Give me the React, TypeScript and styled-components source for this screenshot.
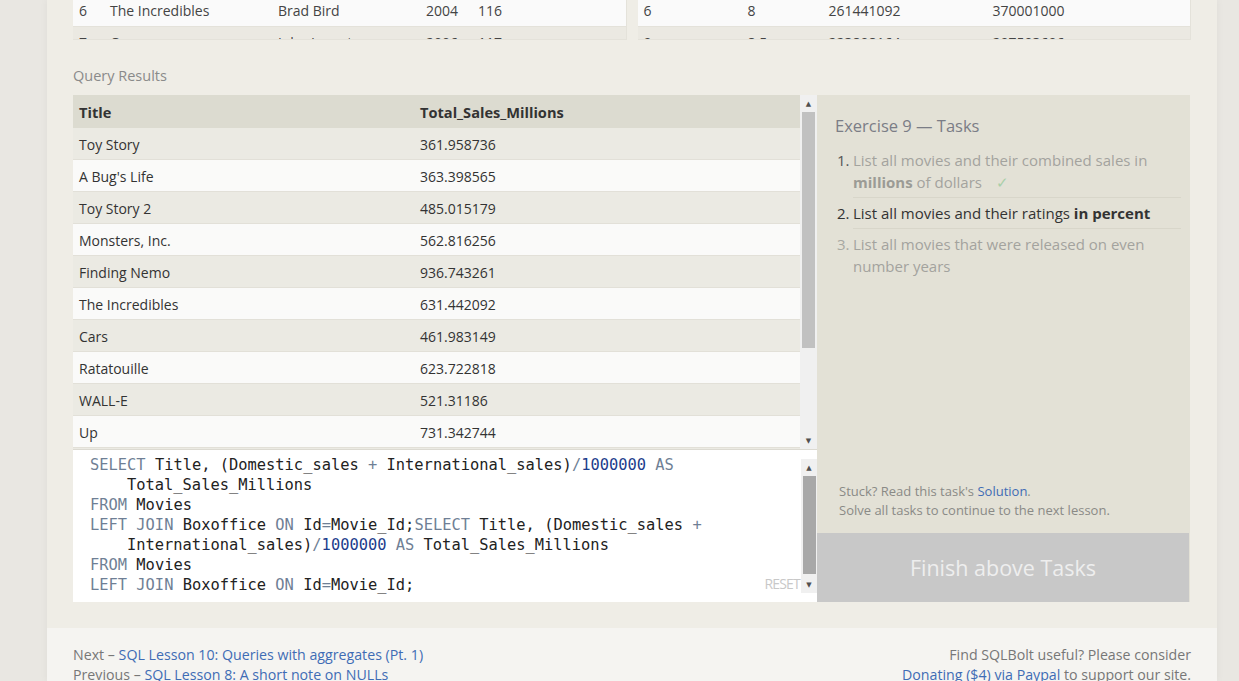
import React from "react";
import styled, { createGlobalStyle } from "styled-components";

const GlobalStyle = createGlobalStyle`
  html, body {
    margin: 0;
    padding: 0;
    background: #e9e7e2;
  }
  body {
    font-family: "Open Sans", "Noto Sans", sans-serif;
    overflow: hidden;
  }
  * { box-sizing: border-box; }
`;

const movies = [
  ["6", "The Incredibles", "Brad Bird", "2004", "116"],
  ["7", "Cars", "John Lasseter", "2006", "117"],
];

const boxoffice = [
  ["6", "8", "261441092", "370001000"],
  ["9", "8.5", "223808164", "297503696"],
];

const results = [
  ["Toy Story", "361.958736"],
  ["A Bug's Life", "363.398565"],
  ["Toy Story 2", "485.015179"],
  ["Monsters, Inc.", "562.816256"],
  ["Finding Nemo", "936.743261"],
  ["The Incredibles", "631.442092"],
  ["Cars", "461.983149"],
  ["Ratatouille", "623.722818"],
  ["WALL-E", "521.31186"],
  ["Up", "731.342744"],
  ["Brave", "538.983207"],
];

export default function App() {
  return (
    <>
      <GlobalStyle />
      <Page>
        <Column>
          <Lesson>
            <TopTables>
              <DataBox>
                <DataInner>
                  {movies.map((r, i) => (
                    <DataRow key={i} alt={i % 2 === 1} cols="31px 168px 148px 52px 1fr">
                      {r.map((c, j) => (
                        <span key={j}>{c}</span>
                      ))}
                    </DataRow>
                  ))}
                </DataInner>
              </DataBox>
              <DataBox>
                <DataInner>
                  {boxoffice.map((r, i) => (
                    <DataRow key={i} alt={i % 2 === 1} cols="104px 81px 164px 1fr">
                      {r.map((c, j) => (
                        <span key={j}>{c}</span>
                      ))}
                    </DataRow>
                  ))}
                </DataInner>
              </DataBox>
            </TopTables>

            <SectionLabel>Query Results</SectionLabel>

            <Workspace>
              <LeftCol>
                <Results>
                  <ResultTable>
                    <ResultHead>
                      <span>Title</span>
                      <span>Total_Sales_Millions</span>
                    </ResultHead>
                    {results.map((r, i) => (
                      <ResultRow key={i} alt={i % 2 === 1}>
                        <span>{r[0]}</span>
                        <span>{r[1]}</span>
                      </ResultRow>
                    ))}
                  </ResultTable>
                  <Scrollbar>
                    <Arrow>▲</Arrow>
                    <Track>
                      <Thumb size={236} />
                    </Track>
                    <Arrow>▼</Arrow>
                  </Scrollbar>
                </Results>

                <Editor>
                  <Code>
                    <CodeLine>
                      <Kw>SELECT</Kw> Title, (Domestic_sales <Kw>+</Kw> International_sales)
                      <Kw>/</Kw>
                      <Num>1000000</Num> <Kw>AS</Kw>
                    </CodeLine>
                    <CodeLine indent>Total_Sales_Millions</CodeLine>
                    <CodeLine>
                      <Kw>FROM</Kw> Movies
                    </CodeLine>
                    <CodeLine>
                      <Kw>LEFT JOIN</Kw> Boxoffice <Kw>ON</Kw> Id<Kw>=</Kw>Movie_Id;
                      <Kw>SELECT</Kw> Title, (Domestic_sales <Kw>+</Kw>
                    </CodeLine>
                    <CodeLine indent>
                      International_sales)<Kw>/</Kw>
                      <Num>1000000</Num> <Kw>AS</Kw> Total_Sales_Millions
                    </CodeLine>
                    <CodeLine>
                      <Kw>FROM</Kw> Movies
                    </CodeLine>
                    <CodeLine>
                      <Kw>LEFT JOIN</Kw> Boxoffice <Kw>ON</Kw> Id<Kw>=</Kw>Movie_Id;
                    </CodeLine>
                    <Reset>RESET</Reset>
                  </Code>
                  <EditorScroll>
                    <Arrow>▲</Arrow>
                    <Track>
                      <Thumb size={98} dark />
                    </Track>
                    <Arrow>▼</Arrow>
                  </EditorScroll>
                </Editor>
              </LeftCol>

              <TaskPanel>
                <TaskBody>
                  <TaskTitle>Exercise 9 — Tasks</TaskTitle>
                  <TaskList>
                    <Task state="done">
                      <TaskNum state="done">1.</TaskNum>
                      <TaskText>
                        List all movies and their combined sales in <b>millions</b> of dollars
                        <Check>✓</Check>
                      </TaskText>
                    </Task>
                    <Task state="active">
                      <TaskNum state="active">2.</TaskNum>
                      <TaskText>
                        List all movies and their ratings <b>in percent</b>
                      </TaskText>
                    </Task>
                    <Task state="todo" last>
                      <TaskNum state="todo">3.</TaskNum>
                      <TaskText>List all movies that were released on even number years</TaskText>
                    </Task>
                  </TaskList>
                </TaskBody>
                <Stuck>
                  Stuck? Read this task's <Link>Solution</Link>.
                  <br />
                  Solve all tasks to continue to the next lesson.
                </Stuck>
                <FinishButton>Finish above Tasks</FinishButton>
              </TaskPanel>
            </Workspace>
          </Lesson>

          <Footer>
            <FooterLeft>
              Next – <Link>SQL Lesson 10: Queries with aggregates (Pt. 1)</Link>
              <br />
              Previous – <Link>SQL Lesson 8: A short note on NULLs</Link>
            </FooterLeft>
            <FooterRight>
              Find SQLBolt useful? Please consider
              <br />
              <Link>Donating ($4) via Paypal</Link> to support our site.
            </FooterRight>
          </Footer>
        </Column>
      </Page>
    </>
  );
}

const Page = styled.div`
  height: 681px;
  overflow: hidden;
  display: flex;
  background: #e9e7e2;
`;

const Column = styled.div`
  margin-left: 47px;
  width: 1170px;
  display: flex;
  flex-direction: column;
  box-shadow: 0 0 8px rgba(0, 0, 0, 0.05);
`;

const Lesson = styled.div`
  background: #efede6;
  padding: 0 26px 26px;
  display: flex;
  flex-direction: column;
`;

const TopTables = styled.div`
  display: flex;
  gap: 11px;
  height: 40px;
`;

const DataBox = styled.div`
  flex: 1;
  overflow: hidden;
  background: #fafafa;
  border-right: 1px solid #e4e2da;
  border-bottom: 1px solid #e4e2da;
`;

const DataInner = styled.div`
  margin-top: -6px;
`;

const DataRow = styled.div<{ alt?: boolean; cols: string }>`
  display: grid;
  grid-template-columns: ${({ cols }) => cols};
  height: 33px;
  align-items: center;
  padding-left: 6px;
  font-size: 14px;
  color: #444;
  background: ${({ alt }) => (alt ? "#ebe9e2" : "#fafafa")};
  border-bottom: 1px solid #e4e2da;
  &:last-child {
    align-items: start;
    padding-top: 6px;
  }
`;

const SectionLabel = styled.div`
  margin: 26px 0 9px;
  font-size: 14.5px;
  line-height: 20px;
  color: #8a8a8a;
`;

const Workspace = styled.div`
  display: flex;
  height: 507px;
`;

const LeftCol = styled.div`
  width: 744px;
  display: flex;
  flex-direction: column;
`;

const Results = styled.div`
  height: 354px;
  display: flex;
  overflow: hidden;
`;

const ResultTable = styled.div`
  flex: 1;
  overflow: hidden;
`;

const ResultHead = styled.div`
  display: grid;
  grid-template-columns: 341px 1fr;
  height: 33px;
  padding-top: 1px;
  align-items: center;
  padding-left: 6px;
  background: #dcdbd0;
  font-weight: 700;
  font-size: 14.6px;
  color: #333;
`;

const ResultRow = styled.div<{ alt?: boolean }>`
  display: grid;
  grid-template-columns: 341px 1fr;
  height: 32px;
  padding-top: 1px;
  align-items: center;
  padding-left: 6px;
  font-size: 14px;
  color: #333;
  background: ${({ alt }) => (alt ? "#fafaf9" : "#ebeae3")};
  border-bottom: 1px solid #e2e0d8;
`;

const Scrollbar = styled.div`
  width: 17px;
  display: flex;
  flex-direction: column;
  background: #f0f0f0;
`;

const EditorScroll = styled(Scrollbar)`
  width: 16px;
  margin: 9px 0 9px 1px;
`;

const Arrow = styled.div`
  height: 17px;
  display: flex;
  align-items: center;
  justify-content: center;
  font-size: 7px;
  color: #505050;
  font-family: "DejaVu Sans", sans-serif;
`;

const Track = styled.div`
  flex: 1;
  display: flex;
  flex-direction: column;
  align-items: center;
`;

const Thumb = styled.div<{ size: number; dark?: boolean }>`
  width: 13px;
  height: ${({ size }) => size}px;
  background: ${({ dark }) => (dark ? "#a8a8a8" : "#c1c1c1")};
`;

const Editor = styled.div`
  flex: 1;
  display: flex;
  background: #fff;
  border-top: 1px solid #dcdad2;
`;

const Code = styled.div`
  position: relative;
  flex: 1;
  padding: 5px 0 0 17px;
  font-family: "DejaVu Sans Mono", "Liberation Mono", monospace;
  font-size: 15.4px;
  line-height: 20px;
  color: #222;
`;

const CodeLine = styled.div<{ indent?: boolean }>`
  white-space: pre;
  padding-left: ${({ indent }) => (indent ? "37px" : "0")};
`;

const Kw = styled.span`
  color: #6f7f95;
`;

const Num = styled.span`
  color: #1c3d8c;
`;

const Reset = styled.span`
  position: absolute;
  right: 0;
  bottom: 8px;
  font-family: "Open Sans", sans-serif;
  font-size: 14px;
  color: #c8c8c8;
  letter-spacing: -0.8px;
`;

const TaskPanel = styled.div`
  width: 373px;
  display: flex;
  flex-direction: column;
  background: #e3e1d6;
`;

const TaskBody = styled.div`
  flex: 1;
  padding: 18px 9px 0 18px;
`;

const TaskTitle = styled.div`
  font-size: 16.5px;
  line-height: 26px;
  color: #7b7d86;
  margin-bottom: 6px;
`;

const TaskList = styled.div`
  display: flex;
  flex-direction: column;
`;

type TaskState = "done" | "active" | "todo";

const Task = styled.div<{ state: TaskState; last?: boolean }>`
  display: grid;
  grid-template-columns: 18px 1fr;
  font-size: 15px;
  line-height: 22px;
  color: ${({ state }) => (state === "active" ? "#333" : "#a3a39e")};
  & > div {
    padding: 4px 0;
    border-bottom: ${({ last }) => (last ? "none" : "1px solid #d8d6ca")};
  }
  b {
    font-weight: 700;
    color: ${({ state }) => (state === "active" ? "#333" : "#9b9b95")};
  }
`;

const TaskNum = styled.span<{ state: TaskState }>`
  padding: 4px 0 0 2px;
  color: ${({ state }) => (state === "todo" ? "#a8a8a2" : state === "done" ? "#555" : "#333")};
`;

const TaskText = styled.div``;

const Check = styled.span`
  margin-left: 14px;
  color: #a9cfa9;
`;

const Stuck = styled.div`
  padding: 0 20px 13px 22px;
  font-size: 13px;
  line-height: 19px;
  color: #8a8a86;
`;

const Link = styled.span`
  color: #3f6cb5;
`;

const FinishButton = styled.div`
  height: 69px;
  display: flex;
  align-items: center;
  justify-content: center;
  background: #c8c8c8;
  color: #eeeeee;
  font-size: 21.5px;
  margin-right: 1px;
`;

const Footer = styled.div`
  flex: 1;
  background: #f5f4f1;
  padding: 17px 26px 0;
  display: flex;
  justify-content: space-between;
  font-size: 14.2px;
  line-height: 20px;
  color: #777;
`;

const FooterLeft = styled.div``;

const FooterRight = styled.div`
  text-align: right;
`;
